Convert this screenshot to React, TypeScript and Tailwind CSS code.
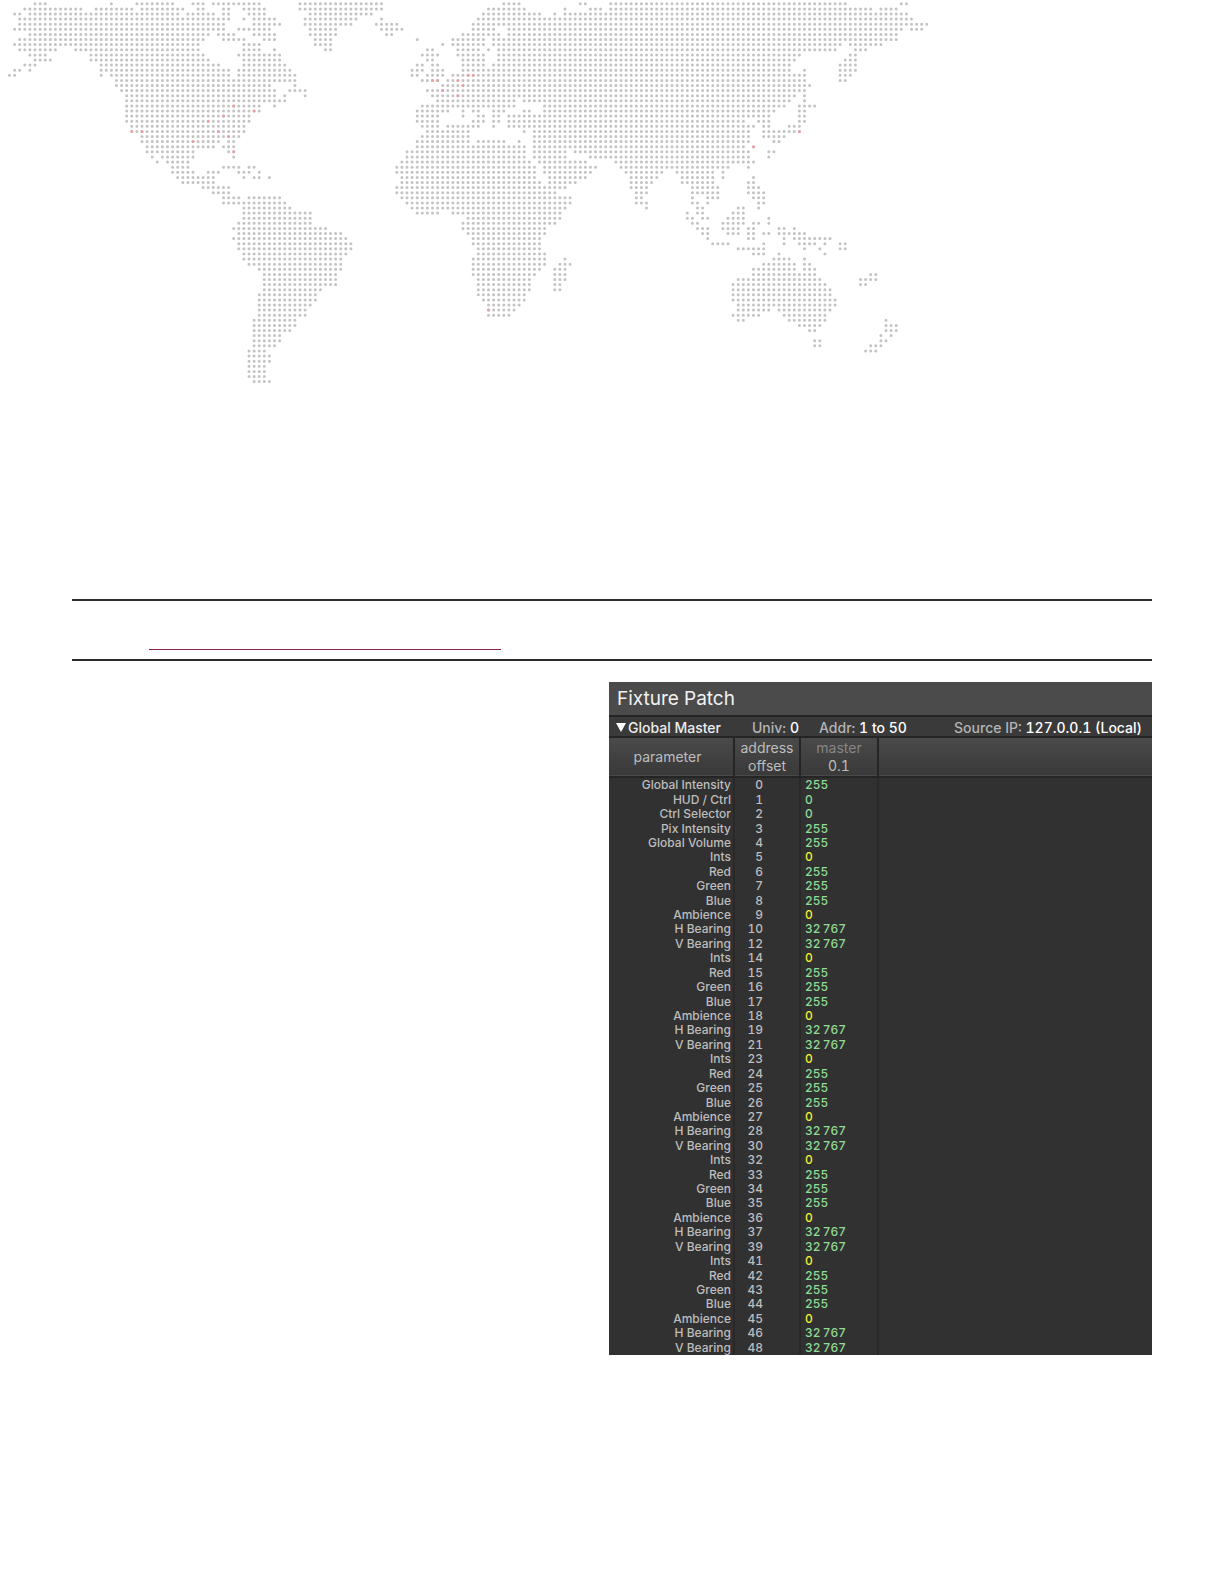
type Range = [number, number];

const PITCH_X = 5.096;
const PITCH_Y = 5.105;

// Land dots of the world map, one string per grid row: column ranges, north to south
const MAP_ROWS = [
  "5-7 20 25-32 36-38 40-49 57-73 97-100 112-113 118-164 175-176",
  "3-14 17-24 26-34 37-38 42-43 46-50 57-73 94-101 109 114-116 118-169 171-174",
  "1-2 4-16 17-33 35-40 42-43 47-50 59-71 93-104 107 109-176",
  "2-43 46 48-52 58-68 73 92-105 106-177",
  "2-42 48-53 58-67 72-76 91-180",
  "1-42 45-51 59-64 73-77 91-95 98-175 177-179",
  "4-39 41-44 48-52 59-64 74-75 89-96 98-174",
  "2-38 42-46 50-52 60-63 80 87-93 95-174",
  "1-37 46-49 60-63 85 87-93 95-163 165-171",
  "2-9 13-37 46-49 52 62-63 82-83 88-92 94 96-162 166-168",
  "4-7 16-38 45-53 81-84 88-93 96-155 165-166",
  "5-8 16-39 46-53 82-83 89-93 96-154 164-166",
  "3-5 18-41 46-54 80-81 83-84 89-93 95-153 163-166",
  "1-2 4 18-43 45-55 79-81 83-85 89-153 156 163-166",
  "0-1 18 20-43 45-56 79-80 82-85 87-156 163-165",
  "21-56 81-84 86-156 163-164",
  "21-51 56 85-157",
  "22-52 55-58 82-156",
  "23-52 54 58 83-154 156",
  "23-54 84-99 101-153 156",
  "23-49 52 81-99 105-152 155-158",
  "23-49 80-86 89 91-92 95-97 101-102 105-150 155-156",
  "23-47 80-84 89 92-93 95-96 98-149 155-156",
  "23-47 80-84 91-93 95-96 98-144 147-149 155-156",
  "24-46 81-84 86-92 95 98-146 148-149 153-155",
  "24-46 82-90 101 103-145 148-155",
  "26-45 81-90 103-145 148-152",
  "26-41 43-44 80-90 92-97 100 103-145 150-151",
  "27-40 42-44 80-101 103-144 146",
  "27-36 43-44 78-101 103-109 111-145 149-150",
  "28 30-36 44 78-101 103-109 114-145 149",
  "29 31-35 77-102 104-113 119-146",
  "32-35 42-45 47-48 76-103 105-115 120-141 145",
  "32-36 39-41 45-47 49 76-103 105-114 121-128 131-138 140",
  "33-40 46 48-49 51 77-103 106-113 122-127 132-138 140 146",
  "34-40 77-104 106-111 122-126 132-138 145-146",
  "38-43 76-109 122-125 134-139 145-147",
  "40-43 76-107 123-125 134-139 145-148",
  "42-45 47-53 77-110 123-124 134 137-139 146-148",
  "42-54 78-110 123-125 134-135 137 147-148",
  "46-55 79-109 125 135-136 143-144 147",
  "46-59 80-84 87-108 133 135-136 142-144",
  "46-59 90-108 133-134 136-137 141-144 149",
  "45-59 89-107 134-135 140-144 146-147 149",
  "44-62 89-105 135-137 140-143 145-146 151-152 154",
  "45-65 90-105 136-137 141-143 145-146 148-149 151-156",
  "44-66 91-104 137 145-146 152 154-161",
  "45-67 91-104 138-141 148 152 155-158 160 163-164",
  "45-67 92-104 143-148 156 159 163-164",
  "46-66 92-105 146-148 151 160",
  "46-65 91-105 109 150-153 156",
  "47-65 91-105 108-110 148-154 156-157",
  "49-65 91-104 107-109 146-154 156-158",
  "50-64 91-103 107-109 146-158 169-170",
  "50-64 92-102 107-109 143-159 167-170",
  "50-64 92-102 107-108 142-160 167-168",
  "50-61 92-102 107-108 142-161",
  "49-60 92-101 142-161",
  "49-60 93-101 142-162",
  "49-59 94-100 143-162",
  "49-58 94-99 143-149 151-161",
  "49-58 94-98 142-147 152-160",
  "48-56 143-144 153-160 172",
  "48-56 155-159 172-174",
  "48-55 157-158 172-174",
  "48-53 171 173",
  "48-53 158-159 171-172",
  "48-52 158-159 169-171",
  "47-50 168-170",
  "47-51",
  "47-51",
  "47-50",
  "47-50",
  "47-50",
  "48-51",
];

// Highlighted cities as [column, row]
const CITIES: Range[] = [
  [44, 20],
  [48, 21],
  [42, 22],
  [39, 23],
  [24, 25],
  [26, 25],
  [41, 25],
  [43, 26],
  [36, 27],
  [44, 29],
  [90, 14],
  [91, 14],
  [83, 15],
  [84, 15],
  [88, 15],
  [89, 16],
  [85, 17],
  [88, 18],
  [155, 25],
  [146, 28],
  [94, 60],
];

const dot = (col: number, row: number) =>
  `M${(9.5 + col * PITCH_X).toFixed(1)} ${(3.8 + row * PITCH_Y).toFixed(1)}h0`;

const landPath = MAP_ROWS.map((line, row) =>
  line
    .split(" ")
    .map((part) => {
      const [start, end = start] = part.split("-").map(Number);
      let d = "";
      for (let col = start; col <= end; col++) d += dot(col, row);
      return d;
    })
    .join(""),
).join("");

const cityPath = CITIES.map(([col, row]) => dot(col, row)).join("");

type Param = { name: string; offset: number; value: string; off?: boolean };

const lightParams = (base: number): Param[] => [
  { name: "Ints", offset: base, value: "0", off: true },
  { name: "Red", offset: base + 1, value: "255" },
  { name: "Green", offset: base + 2, value: "255" },
  { name: "Blue", offset: base + 3, value: "255" },
  { name: "Ambience", offset: base + 4, value: "0", off: true },
  { name: "H Bearing", offset: base + 5, value: "32\u2009767" },
  { name: "V Bearing", offset: base + 7, value: "32\u2009767" },
];

const params: Param[] = [
  { name: "Global Intensity", offset: 0, value: "255" },
  { name: "HUD / Ctrl", offset: 1, value: "0" },
  { name: "Ctrl Selector", offset: 2, value: "0" },
  { name: "Pix Intensity", offset: 3, value: "255" },
  { name: "Global Volume", offset: 4, value: "255" },
  ...[5, 14, 23, 32, 41].flatMap(lightParams),
];

function WorldMap() {
  return (
    <svg viewBox="0 0 1224 384" className="block w-full" aria-hidden="true">
      <g fill="none" strokeLinecap="round">
        <path d={landPath} stroke="#c3c3c3" strokeWidth="3" />
        <path d={cityPath} stroke="#e9a0a4" strokeWidth="3" />
      </g>
    </svg>
  );
}

function FixturePatch() {
  return (
    <section className="w-full max-w-[543px] bg-[#313131] font-[Inter,sans-serif] tabular-nums">
      <h1 className="h-[35px] border-b-2 border-[#252525] bg-[#4b4b4b] pl-2 text-[19px] leading-[34px] text-[#f2f2f2]">
        Fixture Patch
      </h1>
      <div className="flex h-[21px] items-center border-b-2 border-[#252525] bg-[#3a3a3a] pt-[2px] pr-[10px] pl-[7px] text-[14px] leading-[18px] font-medium text-white">
        <button className="flex w-[136px] items-center gap-[2px] text-[#ececec]">
          <svg viewBox="0 0 10 9" className="h-[9px] w-[10px]">
            <path d="M0 0h10L5 9z" fill="#fff" />
          </svg>
          Global Master
        </button>
        <span className="w-[67px]">
          <span className="text-[#b4b4b4]">Univ:</span> 0
        </span>
        <span>
          <span className="text-[#b4b4b4]">Addr:</span> 1 to 50
        </span>
        <span className="ml-auto">
          <span className="text-[#b4b4b4]">Source IP:</span> 127.0.0.1 (Local)
        </span>
      </div>
      <table className="h-[617px] w-full table-fixed border-collapse text-[12px] leading-[14px] font-medium">
        <colgroup>
          <col className="w-[125px]" />
          <col className="w-[66px]" />
          <col className="w-[78px]" />
          <col />
        </colgroup>
        <thead>
          <tr className="h-[39px] border-b-2 border-[#252525] bg-linear-to-b from-[#4a4a4a] to-[#393939] text-[14px] leading-[18px] text-[#bdbdbd]">
            <th className="border-r-2 border-[#252525] pr-[7px] font-normal">parameter</th>
            <th className="border-r-2 border-[#252525] font-normal">
              address
              <br />
              offset
            </th>
            <th className="border-r-2 border-[#252525] font-normal">
              <span className="text-[#868686]">master</span>
              <br />
              0.1
            </th>
            <th />
          </tr>
        </thead>
        <tbody>
          {params.map((p) => (
            <tr key={p.offset}>
              <td className="border-r-2 border-[#292929] pr-[2px] text-right text-[#bdbdbd]">
                {p.name}
              </td>
              <td className="border-r-2 border-[#292929] pr-[36px] text-right text-[#bdbdbd]">
                {p.offset}
              </td>
              <td
                className={
                  p.off
                    ? "border-r-2 border-[#292929] pl-1 text-[#f2f235]"
                    : "border-r-2 border-[#292929] pl-1 text-[#8fdc95]"
                }
              >
                {p.value}
              </td>
              <td />
            </tr>
          ))}
        </tbody>
      </table>
    </section>
  );
}

function App() {
  return (
    <div className="bg-white pb-[229px]">
      <WorldMap />
      <main className="mt-[215px] px-[72px]">
        <div className="h-[62px] border-y-2 border-[#2e2b2c] pt-[48px] pl-[77px]">
          <div className="w-[352px] border-b border-[#8a1f58]" />
        </div>
        <div className="mt-[21px] flex justify-end">
          <FixturePatch />
        </div>
      </main>
    </div>
  );
}

export default App;
